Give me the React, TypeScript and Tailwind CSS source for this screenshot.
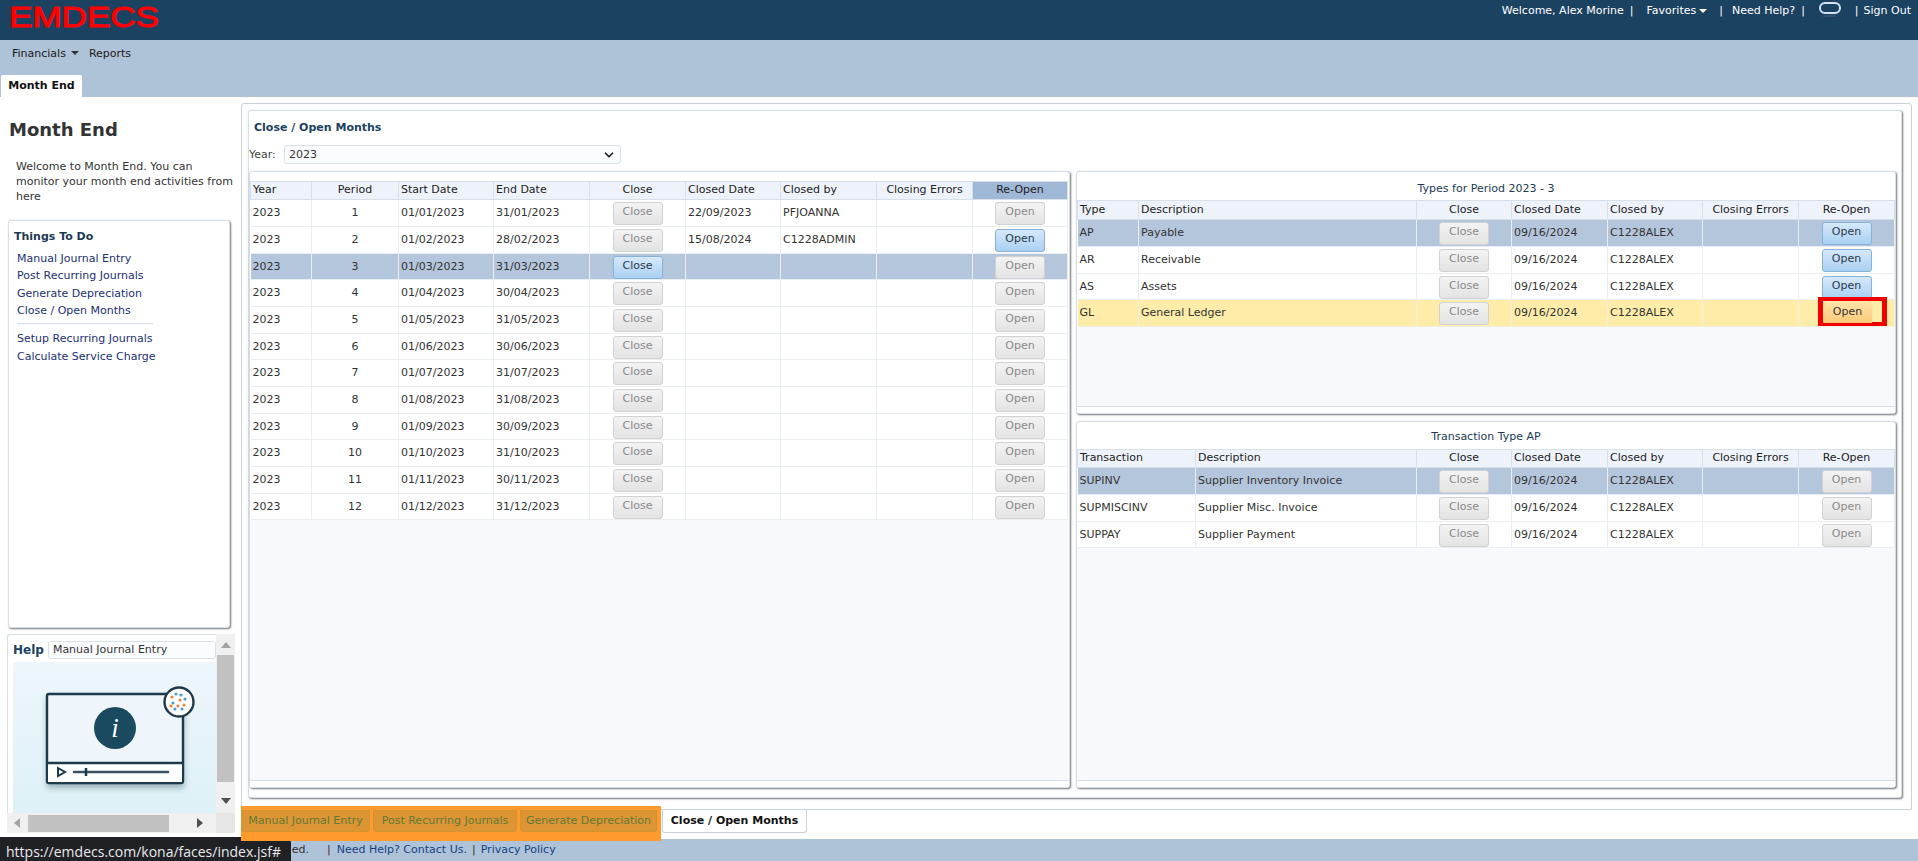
import React from 'react';
import { ChevronDown } from 'lucide-react';

type BtnKind = 'off' | 'on';
type Cell = string | { label: string; kind: BtnKind };
type Col = { label: string; w: string; center?: boolean; active?: boolean };

const Caret = ({ color = 'fill-white' }: { color?: string }) => (
  <svg className={`w-2 h-1 inline-block ${color}`} viewBox="0 0 8 4">
    <polygon points="0,0 8,0 4,4" />
  </svg>
);

const Btn = ({ label, kind }: { label: string; kind: BtnKind }) => (
  <span
    className={`mx-auto flex items-center justify-center w-[50px] h-[23px] rounded-[3px] border pb-[2px] ${
      kind === 'on'
        ? 'border-[#86b2da] bg-gradient-to-b from-[#d6e9fb] to-[#a9d0f2] text-[#2b3a4a]'
        : 'border-[#d2d2d2] bg-gradient-to-b from-[#f3f3f3] to-[#e3e3e3] text-[#8a8a8a]'
    }`}
  >
    {label}
  </span>
);

const DataTable = ({
  cols,
  rows,
  selected,
  warn,
  headHeight = 'h-[18px]',
}: {
  cols: Col[];
  rows: Cell[][];
  selected?: number;
  warn?: number;
  headHeight?: string;
}) => (
  <table className="table-fixed border-collapse w-[817px] bg-white text-[#333]">
    <colgroup>
      {cols.map((c) => (
        <col key={c.label} className={c.w} />
      ))}
    </colgroup>
    <thead>
      <tr className={headHeight}>
        {cols.map((c) => (
          <th
            key={c.label}
            className={`p-0 font-normal text-[#222] border border-[#d6dfea] ${c.center ? 'text-center' : 'text-left pl-[2px]'} ${
              c.active ? 'bg-[#9fb8d6]' : 'bg-[#eef3fb]'
            }`}
          >
            {c.label}
          </th>
        ))}
      </tr>
    </thead>
    <tbody>
      {rows.map((row, i) => {
        const isSel = i === selected;
        const isWarn = i === warn;
        return (
          <tr key={i} className={i % 3 === 2 ? 'h-[26px]' : 'h-[27px]'}>
            {row.map((cell, j) => (
              <td
                key={j}
                className={`p-0 pt-[1px] border-b border-r ${
                  isSel
                    ? 'bg-[#b3c6dc] border-[#e8edf3]'
                    : isWarn
                      ? 'bg-[#feeca8] border-[#f0f0e0]'
                      : 'bg-white border-[#e9eef3]'
                } ${cols[j].center ? 'text-center' : 'text-left pl-[2px]'}`}
              >
                {typeof cell === 'string' ? cell : <Btn label={cell.label} kind={cell.kind} />}
              </td>
            ))}
          </tr>
        );
      })}
    </tbody>
  </table>
);

const close: Cell = { label: 'Close', kind: 'off' };
const open: Cell = { label: 'Open', kind: 'off' };
const openOn: Cell = { label: 'Open', kind: 'on' };

const monthCols: Col[] = [
  { label: 'Year', w: 'w-[61px]' },
  { label: 'Period', w: 'w-[87px]', center: true },
  { label: 'Start Date', w: 'w-[95px]' },
  { label: 'End Date', w: 'w-[96px]' },
  { label: 'Close', w: 'w-[96px]', center: true },
  { label: 'Closed Date', w: 'w-[95px]' },
  { label: 'Closed by', w: 'w-[96px]' },
  { label: 'Closing Errors', w: 'w-[96px]', center: true },
  { label: 'Re-Open', w: 'w-[95px]', center: true, active: true },
];

const monthEnds = ['31', '28', '31', '30', '31', '30', '31', '31', '30', '31', '30', '31'];

const monthRows: Cell[][] = monthEnds.map((last, i) => {
  const m = String(i + 1).padStart(2, '0');
  return [
    '2023',
    String(i + 1),
    `01/${m}/2023`,
    `${last}/${m}/2023`,
    i === 2 ? { label: 'Close', kind: 'on' } : close,
    i === 0 ? '22/09/2023' : i === 1 ? '15/08/2024' : '',
    i === 0 ? 'PFJOANNA' : i === 1 ? 'C1228ADMIN' : '',
    '',
    i === 1 ? openOn : open,
  ];
});

const tailCols: Col[] = [
  { label: 'Close', w: 'w-[95px]', center: true },
  { label: 'Closed Date', w: 'w-[96px]' },
  { label: 'Closed by', w: 'w-[95px]' },
  { label: 'Closing Errors', w: 'w-[96px]', center: true },
  { label: 'Re-Open', w: 'w-[96px]', center: true },
];

const typeCols: Col[] = [
  { label: 'Type', w: 'w-[61px]' },
  { label: 'Description', w: 'w-[278px]' },
  ...tailCols,
];

const transCols: Col[] = [
  { label: 'Transaction', w: 'w-[118px]' },
  { label: 'Description', w: 'w-[221px]' },
  ...tailCols,
];

const typeRows: Cell[][] = [
  ['AP', 'Payable', close, '09/16/2024', 'C1228ALEX', '', openOn],
  ['AR', 'Receivable', close, '09/16/2024', 'C1228ALEX', '', openOn],
  ['AS', 'Assets', close, '09/16/2024', 'C1228ALEX', '', openOn],
  ['GL', 'General Ledger', close, '09/16/2024', 'C1228ALEX', '', open],
];

const transRows: Cell[][] = [
  ['SUPINV', 'Supplier Inventory Invoice', close, '09/16/2024', 'C1228ALEX', '', open],
  ['SUPMISCINV', 'Supplier Misc. Invoice', close, '09/16/2024', 'C1228ALEX', '', open],
  ['SUPPAY', 'Supplier Payment', close, '09/16/2024', 'C1228ALEX', '', open],
];

const panel =
  'flex flex-col bg-white border border-[#d5dde6] rounded-[3px] shadow-[1px_1px_2px_#777]';

const TableFoot = () => (
  <div className="flex-1 flex flex-col justify-end bg-[#f7f9fc]">
    <div className="h-[7px] bg-white border-t border-[#d5dde6]" />
  </div>
);

// help video illustration
const HelpVideo = () => (
  <svg className="w-[201px] h-[151px]" viewBox="0 0 201 151">
    <defs>
      <filter id="soft">
        <feGaussianBlur stdDeviation="3" />
      </filter>
    </defs>
    <rect x="34" y="35" width="137" height="91" fill="#5f7885" opacity="0.55" filter="url(#soft)" />
    <rect x="34" y="32" width="136" height="89" rx="2" fill="#eef6fb" stroke="#1d3a4b" strokeWidth="2.4" />
    <rect x="35" y="101" width="134" height="19" fill="#fff" />
    <line x1="34" y1="101" x2="170" y2="101" stroke="#1d3a4b" strokeWidth="2.4" />
    <circle cx="102" cy="66" r="21" fill="#1a4a60" />
    <text x="102" y="75" textAnchor="middle" fontFamily="Liberation Serif, serif" fontStyle="italic" fontSize="27" fill="#fff">
      i
    </text>
    <polygon points="45,106 52,110 45,114" fill="#fff" stroke="#1d3a4b" strokeWidth="2" />
    <line x1="61" y1="110" x2="155" y2="110" stroke="#3b5361" strokeWidth="2.5" strokeLinecap="round" />
    <line x1="73" y1="106" x2="73" y2="114" stroke="#1d3a4b" strokeWidth="2.5" />
    <circle cx="166" cy="40" r="14.5" fill="#fff" stroke="#1d3a4b" strokeWidth="2.4" />
    {[
      [159, 35, '#e8853a'],
      [163, 32, '#4a9cd8'],
      [168, 33, '#4a9cd8'],
      [172, 37, '#4a9cd8'],
      [167, 38, '#e8853a'],
      [160, 41, '#4a9cd8'],
      [165, 44, '#e8853a'],
      [171, 43, '#e8853a'],
      [162, 47, '#4a9cd8'],
      [169, 47, '#4a9cd8'],
      [158, 44, '#e8853a'],
    ].map(([x, y, c], i) => (
      <circle key={i} cx={x as number} cy={y as number} r="1.6" fill={c as string} />
    ))}
  </svg>
);

const Sep = () => <span className="text-white">|</span>;

export default function App() {
  return (
    <div className="relative h-screen w-full overflow-hidden bg-white font-['DejaVu_Sans',Verdana,sans-serif] text-[11px] text-[#333]">
      {/* Top bar */}
      <header className="h-10 bg-[#1c4262] flex justify-between text-white">
        <div className="pl-[9px]">
          <svg className="block w-[152px] h-[36px]" viewBox="0 0 152 36">
            <text
              x="0"
              y="26.5"
              textLength="150"
              lengthAdjust="spacingAndGlyphs"
              fontFamily="Liberation Sans, sans-serif"
              fontSize="29"
              fill="#ff0000"
              stroke="#ff0000"
              strokeWidth="1"
              strokeLinejoin="round"
            >
              EMDECS
            </text>
          </svg>
        </div>
        <div className="flex items-start pt-[3px] pr-[7px] leading-[15px]">
          <span>Welcome, Alex Morine</span>
          <span className="ml-[6px]"><Sep /></span>
          <span className="ml-[13px]">Favorites</span>
          <span className="ml-[3px]"><Caret /></span>
          <span className="ml-[12px]"><Sep /></span>
          <span className="ml-[9px]">Need Help?</span>
          <span className="ml-[6px]"><Sep /></span>
          <svg className="ml-[13px] -mt-[2px] w-[24px] h-[17px]" viewBox="0 0 24 17">
            <rect x="2" y="2" width="20" height="10" rx="5" fill="none" stroke="#d3e2f1" strokeWidth="2" />
            <ellipse cx="12" cy="15" rx="8" ry="1" fill="#34526e" />
          </svg>
          <span className="ml-[13px]"><Sep /></span>
          <span className="ml-[5px]">Sign Out</span>
        </div>
      </header>

      {/* Menu band with module tab */}
      <div className="h-[57px] bg-[#aec3d8] flex flex-col justify-between">
        <nav className="flex items-center pl-[12px] pt-[5px] leading-[16px] text-[#1a1a1a]">
          <span>Financials</span>
          <span className="ml-[5px] mb-[2px]"><Caret color="fill-[#333]" /></span>
          <span className="ml-[10px]">Reports</span>
        </nav>
        <div className="w-[81px] h-[22px] ml-[1px] bg-white rounded-t-[2px] font-bold text-[11px] text-[#111] flex items-center justify-center">
          Month End
        </div>
      </div>

      {/* Body */}
      <div className="flex h-[742px]">
        <aside className="w-[241px] shrink-0 flex flex-col">
          <h1 className="pl-[9px] pt-[22px] text-[18px] leading-[22px] font-bold text-[#333]">Month End</h1>
          <p className="mt-[18px] pl-[16px] pr-[8px] leading-[15px]">
            Welcome to Month End. You can monitor your month end activities from here
          </p>

          <div className={`${panel} mt-[16px] ml-[8px] w-[222px] h-[408px] pl-[5px] pt-[8px]`}>
            <h2 className="font-bold text-[#1c3a55] leading-[16px]">Things To Do</h2>
            <ul className="mt-[5px] pl-[3px] text-[#1c2f78] leading-[17.3px]">
              <li>Manual Journal Entry</li>
              <li>Post Recurring Journals</li>
              <li>Generate Depreciation</li>
              <li>Close / Open Months</li>
            </ul>
            <div className="ml-[3px] mt-[4px] w-[136px] border-t border-[#d5dde6]" />
            <ul className="mt-[6px] pl-[3px] text-[#1c2f78] leading-[18px]">
              <li>Setup Recurring Journals</li>
              <li>Calculate Service Charge</li>
            </ul>
          </div>

          {/* Help box with scrollbars */}
          <div className="mt-[6px] ml-[7px] w-[228px] h-[199px] grid grid-cols-[209px_19px] grid-rows-[179px_20px]">
            <div className="border-l border-t border-[#d5dde6] rounded-tl-[3px] pl-[5px] pt-[5px] overflow-hidden">
              <div className="flex items-center h-[19px]">
                <span className="font-bold text-[12px] text-[#1c4262]">Help</span>
                <div className="ml-[4px] flex-1 h-[18px] leading-[16px] pl-[4px] border border-[#d8e0e8] rounded-[3px] bg-[#fbfcfe]">
                  Manual Journal Entry
                </div>
              </div>
              <div className="mt-[3px] bg-gradient-to-b from-[#eef6fc] to-[#ddf1f7]">
                <HelpVideo />
              </div>
            </div>
            <div className="bg-[#f0f0f0] flex flex-col items-center">
              <svg className="mt-[8px] w-[10px] h-[6px] fill-[#a3a3a3]" viewBox="0 0 10 6">
                <polygon points="5,0 10,6 0,6" />
              </svg>
              <div className="mt-[7px] w-[17px] h-[127px] bg-[#c1c1c1]" />
              <svg className="mt-[16px] w-[10px] h-[6px] fill-[#505050]" viewBox="0 0 10 6">
                <polygon points="0,0 10,0 5,6" />
              </svg>
            </div>
            <div className="bg-[#f0f0f0] flex items-center pl-[7px]">
              <svg className="w-[6px] h-[10px] fill-[#a3a3a3]" viewBox="0 0 6 10">
                <polygon points="6,0 6,10 0,5" />
              </svg>
              <div className="ml-[8px] w-[141px] h-[17px] bg-[#c1c1c1]" />
              <svg className="ml-[28px] w-[6px] h-[10px] fill-[#505050]" viewBox="0 0 6 10">
                <polygon points="0,0 6,5 0,10" />
              </svg>
            </div>
            <div className="bg-[#e6e6e6] rounded-br-[3px]" />
          </div>
        </aside>

        <main className="flex-1 min-w-0 flex flex-col pt-[6px] pr-[6px]">
          {/* Outer frame */}
          <div className="h-[707px] border border-[#c9d3de] rounded-t-[3px] pl-[6px] pt-[6px]">
            <section className={`${panel} w-[1654px] h-[688px] pr-[4px] pb-[9px]`}>
              <h2 className="pl-[5px] h-[34px] flex items-center font-bold text-[#1c4262]">Close / Open Months</h2>
              <div className="flex items-center h-[19px]">
                <span className="w-[35px] pt-[1px] text-[#444]">Year:</span>
                <div className="w-[337px] h-[19px] pl-[4px] pr-[4px] pt-[1px] flex items-center justify-between border border-[#d8e0e8] rounded-[3px] bg-[#fbfcfe]">
                  <span>2023</span>
                  <ChevronDown className="w-[14px] h-[14px] text-[#222]" strokeWidth={3} />
                </div>
              </div>

              <div className="mt-[7px] flex-1 min-h-0 flex gap-[6px]">
                <div className={`${panel} w-[821px]`}>
                  <div className="h-[9px]" />
                  <DataTable cols={monthCols} rows={monthRows} selected={2} />
                  <TableFoot />
                </div>

                <div className="w-[820px] flex flex-col gap-[7px]">
                  <div className={`${panel} h-[243px]`}>
                    <div className="h-[28px] flex items-center justify-center pt-[6px] text-[#1c3a55]">
                      Types for Period 2023 - 3
                    </div>
                    <div className="relative">
                      <DataTable cols={typeCols} rows={typeRows} selected={0} warn={3} headHeight="h-[19px]" />
                      {/* annotation over the GL Open button */}
                      <div className="absolute left-[741px] top-[97px] w-[69px] h-[29px] border-x-[5px] border-y-[4px] border-[#f00000]">
                        <div className="absolute left-0 top-[1px] w-[49px] h-[21px] bg-gradient-to-b from-[#fee3a6] to-[#fbca78] flex items-center justify-center text-[#333]">
                          Open
                        </div>
                      </div>
                    </div>
                    <TableFoot />
                  </div>

                  <div className={`${panel} flex-1 min-h-0`}>
                    <div className="h-[27px] flex items-center justify-center pt-[3px] text-[#1c3a55]">
                      Transaction Type AP
                    </div>
                    <DataTable cols={transCols} rows={transRows} selected={0} />
                    <TableFoot />
                  </div>
                </div>
              </div>
            </section>
          </div>

          {/* Bottom tabs */}
          <div className="h-[29px] flex items-start">
            <div className="relative z-10 -mt-[4px] w-[420px] h-[35px] bg-[#ff9a2f] flex items-start gap-[3px] pt-[4px] pr-[3px]">
              <span className="w-[129px] h-[22px] flex items-center justify-center rounded-b-[3px] border border-[#d2942f] bg-[#dc9532] text-[#5f7a3a]">
                Manual Journal Entry
              </span>
              <span className="w-[144px] h-[22px] flex items-center justify-center rounded-b-[3px] border border-[#d2942f] bg-[#dc9532] text-[#5f7a3a]">
                Post Recurring Journals
              </span>
              <span className="w-[137px] h-[22px] flex items-center justify-center rounded-b-[3px] border border-[#d2942f] bg-[#dc9532] text-[#5f7a3a]">
                Generate Depreciation
              </span>
            </div>
            <span className="ml-[1px] w-[145px] h-[23px] flex items-center justify-center rounded-b-[3px] border-x border-b border-[#c9d3de] bg-white font-bold text-[#111]">
              Close / Open Months
            </span>
          </div>
        </main>
      </div>

      {/* Footer */}
      <footer className="h-[22px] bg-[#aec3d8] flex items-center text-[#1b3f86]">
        <span className="w-[309px] text-right text-[#333]">ed.</span>
        <span className="ml-[18px] text-[#333]">|</span>
        <span className="ml-[6px]">Need Help? Contact Us.</span>
        <span className="ml-[5px] text-[#333]">|</span>
        <span className="ml-[5px]">Privacy Policy</span>
      </footer>

      {/* Browser link preview */}
      <div className="absolute left-0 bottom-0 w-[291px] h-[24px] pl-[6px] pt-[4px] flex items-center rounded-tr-[6px] bg-[#202124] font-['Open_Sans',sans-serif] text-[14px] text-[#e8eaed]">
        https://emdecs.com/kona/faces/index.jsf#
      </div>
    </div>
  );
}
